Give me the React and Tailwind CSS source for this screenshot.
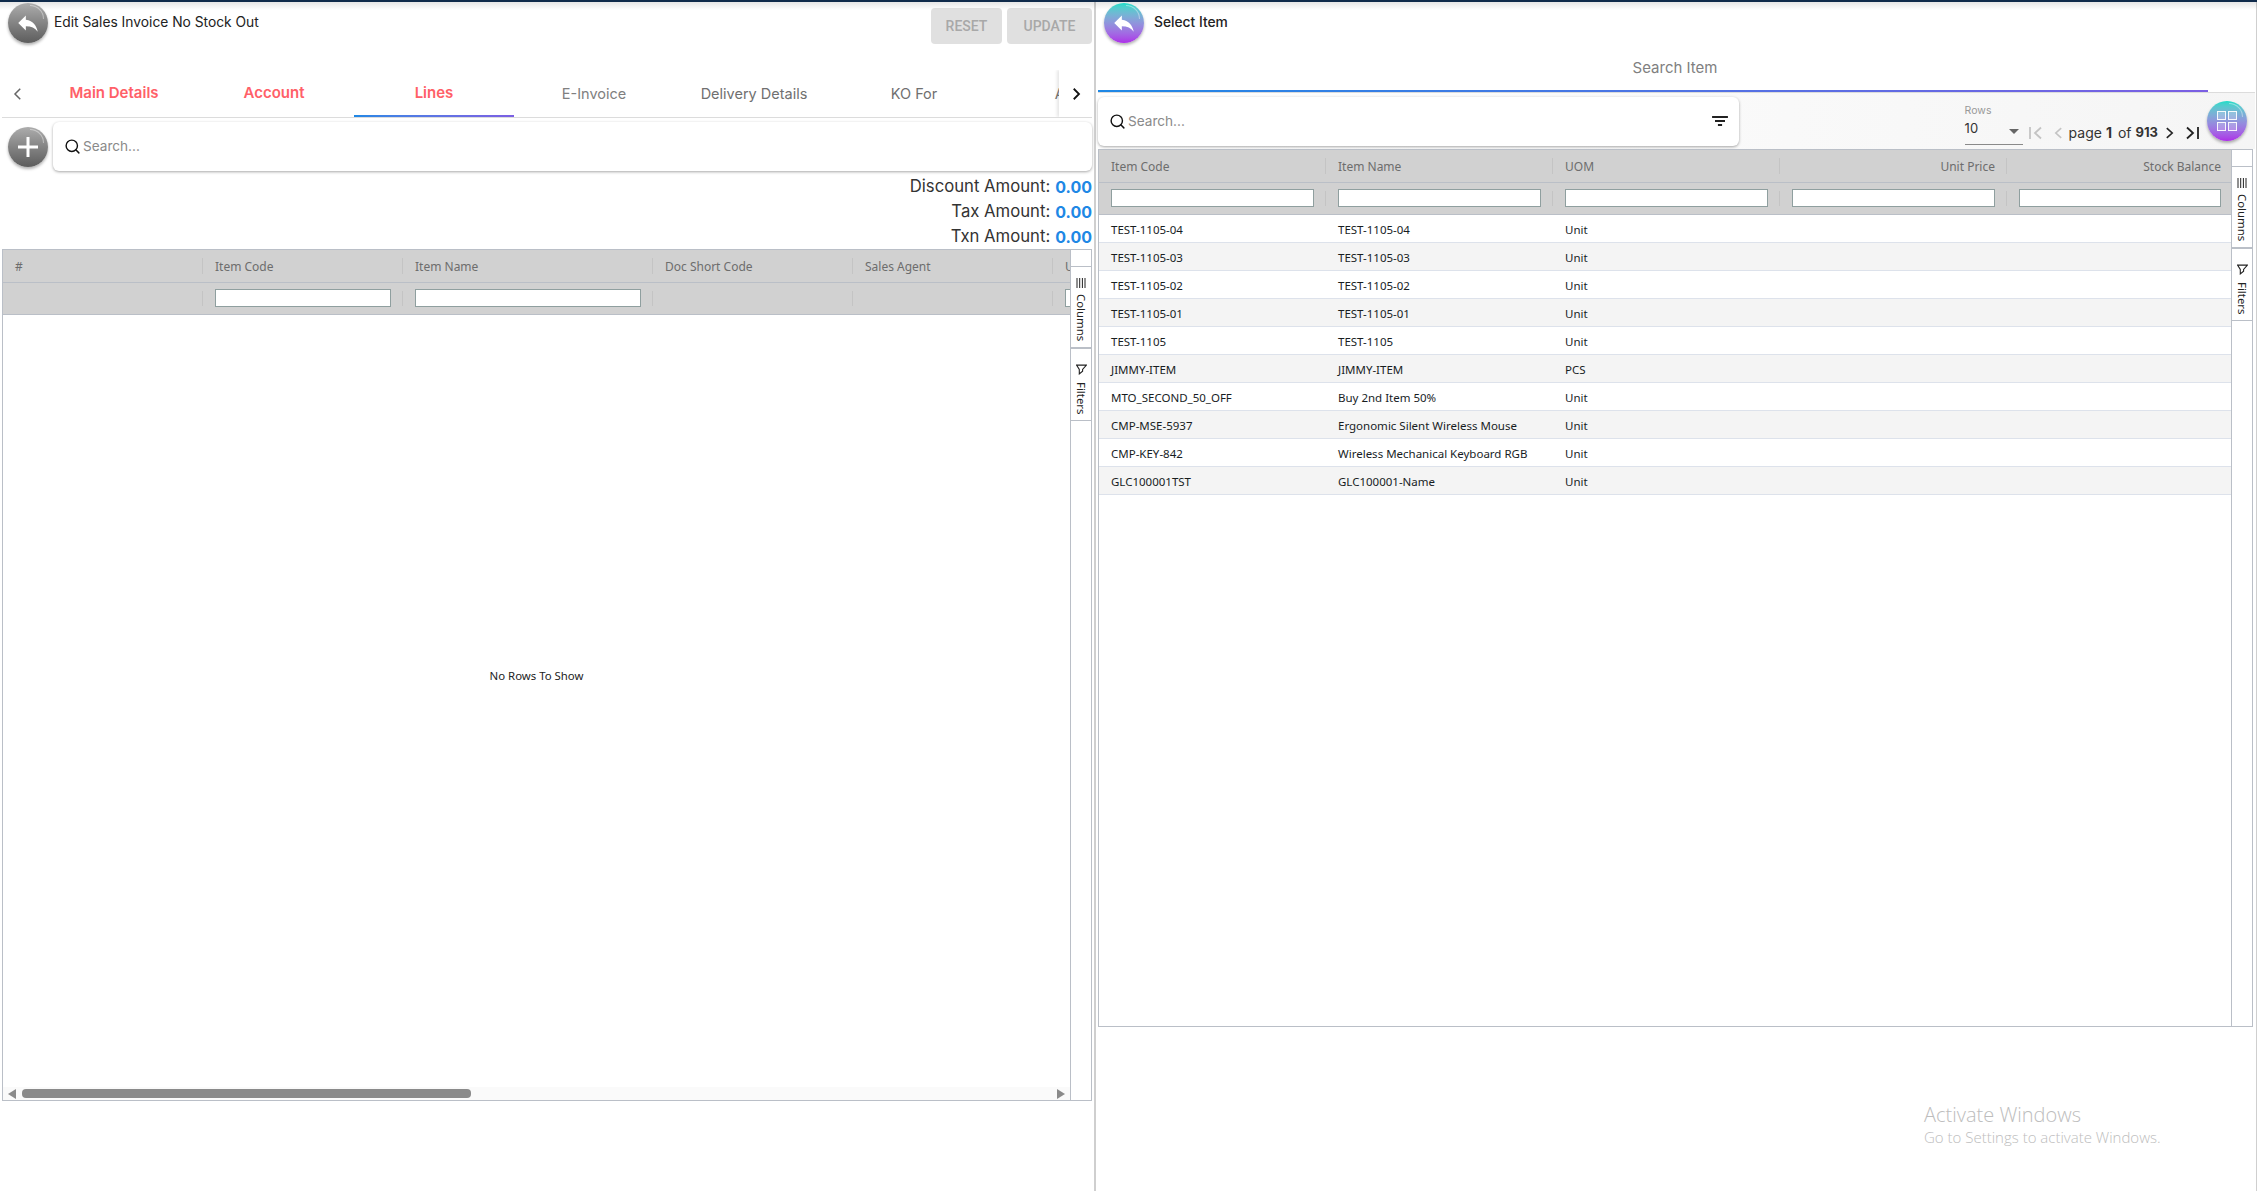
import { Search } from 'lucide-react'

const poppins = "font-['Inter','Noto_Sans',sans-serif]"
const grid = "font-['Noto_Sans','Open_Sans',sans-serif]"

const tabs = [
  { label: 'Main Details', className: 'text-[15px] font-semibold text-[#ff6068]' },
  { label: 'Account', className: 'text-[15px] font-semibold text-[#ff6068]' },
  { label: 'Lines', className: 'text-[15px] font-semibold text-[#ff6068]', active: true },
  { label: 'E-Invoice', className: 'text-[14.5px] text-[#808080]' },
  { label: 'Delivery Details', className: 'text-[14.5px] text-[#707070]' },
  { label: 'KO For', className: 'text-[14.5px] text-[#707070]' },
  { label: 'ARAP', className: 'text-[14.5px] text-[#707070]' },
]

const rows = [
  ['TEST-1105-04', 'TEST-1105-04', 'Unit'],
  ['TEST-1105-03', 'TEST-1105-03', 'Unit'],
  ['TEST-1105-02', 'TEST-1105-02', 'Unit'],
  ['TEST-1105-01', 'TEST-1105-01', 'Unit'],
  ['TEST-1105', 'TEST-1105', 'Unit'],
  ['JIMMY-ITEM', 'JIMMY-ITEM', 'PCS'],
  ['MTO_SECOND_50_OFF', 'Buy 2nd Item 50%', 'Unit'],
  ['CMP-MSE-5937', 'Ergonomic Silent Wireless Mouse', 'Unit'],
  ['CMP-KEY-842', 'Wireless Mechanical Keyboard RGB', 'Unit'],
  ['GLC100001TST', 'GLC100001-Name', 'Unit'],
]

function BackIcon() {
  return (
    <svg viewBox="0 0 24 24" className="w-[26px] h-[26px]" fill="#fff">
      <path d="M10 9V5l-7 7 7 7v-4.1c5 0 8.5 1.6 11 5.1-1-5-4-10-11-11z" />
    </svg>
  )
}

function RoundButton({ color, children }) {
  return (
    <button className={`relative w-10 h-10 rounded-full flex items-center justify-center shrink-0 shadow-[0_2px_3px_rgba(0,0,0,0.3)] ${color}`}>
      <span className="absolute top-[2px] right-[4px] w-[14px] h-[14px] rounded-tr-full border-t border-r border-white/40" />
      {children}
    </button>
  )
}

function SearchBox({ className, children }) {
  return (
    <div className={`h-[49px] bg-white rounded-md flex items-center shadow-[0_1px_3px_rgba(0,0,0,0.35)] ${className}`}>
      <Search size={17} strokeWidth={2} className="ml-[11px] text-[#111] shrink-0" />
      <span className={`ml-[2px] text-[13.6px] text-[#8a8a8a] flex-1 ${poppins}`}>Search...</span>
      {children}
    </div>
  )
}

function HeaderCell({ width, right, children, last }) {
  return (
    <div className={`relative flex items-center h-full shrink-0 px-3 pt-[1px] text-[12px] text-[#6d6d6d] overflow-hidden ${right ? 'justify-end' : ''}`} style={{ width }}>
      <span className="whitespace-nowrap">{children}</span>
      {!last && <span className="absolute right-0 top-[8px] bottom-[8px] w-px bg-[#c4c4c4]" />}
    </div>
  )
}

function FilterCell({ width, input, last }) {
  return (
    <div className="relative flex items-center h-full shrink-0 px-3 pb-[2px] overflow-hidden" style={{ width }}>
      {input && <div className="w-full min-w-[160px] h-[18px] bg-white border border-[#8f9f9f] shrink-0" />}
      {!last && <span className="absolute right-0 top-[8px] bottom-[8px] w-px bg-[#c4c4c4]" />}
    </div>
  )
}

function GridSideBar() {
  return (
    <div className={`w-[21px] shrink-0 border-l border-[#babfc7] bg-white flex flex-col ${grid}`}>
      <div className="h-[17px] border-b border-[#babfc7] shrink-0" />
      <div className="h-[82px] border-b-2 border-[#babfc7] flex flex-col items-center pt-[11px] shrink-0">
        <svg viewBox="0 0 10 10" className="w-[10px] h-[10px] shrink-0" stroke="#222" strokeWidth="1">
          <path d="M1 0v10M3.7 0v10M6.4 0v10M9 0v10" />
        </svg>
        <span className="mt-[6px] text-[11.4px] leading-none text-[#222] [writing-mode:vertical-rl]">Columns</span>
      </div>
      <div className="h-[72px] border-b border-[#babfc7] flex flex-col items-center pt-[15px] shrink-0">
        <svg viewBox="0 0 10 10" className="w-[11px] h-[11px] shrink-0" fill="none" stroke="#222" strokeWidth="1">
          <path d="M0.5 1h9L6 5v1.5L3 9V5z" />
        </svg>
        <span className="mt-[7px] text-[11.4px] leading-none text-[#222] [writing-mode:vertical-rl]">Filters</span>
      </div>
    </div>
  )
}

function Tabs() {
  return (
    <div className="h-[48px] mt-[27px] ml-[2px] w-[1090px] border-b border-[#dcdcdc] flex items-stretch relative overflow-hidden">
      <div className="w-[32px] shrink-0 flex items-center justify-center">
        <svg viewBox="0 0 24 24" className="w-[18px] h-[18px]" fill="none" stroke="#666" strokeWidth="2">
          <path d="M15 5l-7 7 7 7" />
        </svg>
      </div>
      <div className="flex-1 flex overflow-hidden">
        {tabs.map((tab) => (
          <div key={tab.label} className={`relative w-[160px] shrink-0 flex items-center justify-center ${poppins} ${tab.className}`}>
            {tab.label}
            {tab.active && <span className="absolute left-0 right-0 bottom-0 h-[2px] bg-gradient-to-r from-[#1e88e5] to-[#7b5fe3]" />}
          </div>
        ))}
      </div>
      <div className="w-[33px] shrink-0 bg-white flex items-center justify-center shadow-[-2px_0_3px_rgba(0,0,0,0.1)]">
        <svg viewBox="0 0 24 24" className="w-[18px] h-[18px]" fill="none" stroke="#111" strokeWidth="2.4">
          <path d="M9 5l7 7-7 7" />
        </svg>
      </div>
    </div>
  )
}

function AmountLine({ label, value }) {
  return (
    <div className="h-[25px] flex items-center justify-end gap-[5px] text-[#333]">
      <span className="text-[16.7px]">{label}</span>
      <span className="text-[16px] font-bold text-[#1e88e5]">{value}</span>
    </div>
  )
}

function LeftPane() {
  const cols = [
    { w: 200, label: '#' },
    { w: 200, label: 'Item Code', input: true },
    { w: 250, label: 'Item Name', input: true },
    { w: 200, label: 'Doc Short Code' },
    { w: 200, label: 'Sales Agent' },
    { w: 200, label: 'UOM', input: true },
  ]
  return (
    <div className="w-[1094px] h-full shrink-0 flex flex-col">
      <div className="flex items-start pt-[3px] pl-[8px] pr-[2px] h-[43px]">
        <RoundButton color="bg-gradient-to-b from-[#adadad] to-[#5d5d5d]">
          <BackIcon />
        </RoundButton>
        <span className={`ml-[6px] mt-[9px] text-[13.8px] text-[#222] ${poppins}`}>Edit Sales Invoice No Stock Out</span>
        <div className={`ml-auto mt-[5px] flex gap-[5px] text-[14px] font-medium text-[#a8a8a8] font-['Roboto',sans-serif]`}>
          <button className="w-[71px] h-[36px] bg-[#e0e0e0] rounded">RESET</button>
          <button className="w-[85px] h-[36px] bg-[#e0e0e0] rounded">UPDATE</button>
        </div>
      </div>

      <Tabs />

      <div className="flex items-center pl-[8px] pr-[2px] mt-[4px]">
        <RoundButton color="bg-gradient-to-b from-[#adadad] to-[#5d5d5d]">
          <svg viewBox="0 0 24 24" className="w-[24px] h-[24px]" stroke="#fff" strokeWidth="3">
            <path d="M12 2v20M2 12h20" />
          </svg>
        </RoundButton>
        <SearchBox className="ml-[5px] flex-1" />
      </div>

      <div className={`mr-[2px] mt-[3px] ${poppins}`}>
        <AmountLine label="Discount Amount:" value="0.00" />
        <AmountLine label="Tax Amount:" value="0.00" />
        <AmountLine label="Txn Amount:" value="0.00" />
      </div>

      {/* Lines grid */}
      <div className={`ml-[2px] w-[1090px] h-[852px] border border-[#babfc7] flex ${grid}`}>
        <div className="flex-1 min-w-0 flex flex-col">
          <div className="h-[33px] bg-[#d1d1d1] border-b border-[#babfc7] flex shrink-0 overflow-hidden">
            {cols.map((c) => (
              <HeaderCell key={c.label} width={c.w}>{c.label}</HeaderCell>
            ))}
          </div>
          <div className="h-[32px] bg-[#d1d1d1] border-b border-[#babfc7] flex shrink-0 overflow-hidden">
            {cols.map((c) => (
              <FilterCell key={c.label} width={c.w} input={c.input} />
            ))}
          </div>
          <div className="flex-1 flex items-center justify-center text-[11.4px] text-[#222] pb-[50px]">No Rows To Show</div>
          <div className="h-[13px] bg-[#fafafa] flex items-center shrink-0 pl-[5px] pr-[5px]">
            <svg viewBox="0 0 8 10" className="w-[8px] h-[10px]" fill="#8a8a8a"><path d="M8 0v10L0 5z" /></svg>
            <div className="ml-[6px] w-[449px] h-[9px] bg-[#8a8a8a] rounded-[4px]" />
            <svg viewBox="0 0 8 10" className="ml-auto w-[8px] h-[10px]" fill="#8a8a8a"><path d="M0 0v10l8-5z" /></svg>
          </div>
        </div>
        <GridSideBar />
      </div>
    </div>
  )
}

function Pager() {
  return (
    <div className={`flex flex-col items-start ${poppins}`}>
      <div className="flex items-end">
        <div className="w-[58px] h-[39px] border-b border-[#8a8a8a] relative">
          <div className="text-[10.5px] leading-none text-[#999]">Rows</div>
          <div className="mt-[6px] text-[13px] leading-none text-[#333]">10</div>
          <span className="absolute right-[4px] top-[23px] w-0 h-0 border-x-[5px] border-x-transparent border-t-[5px] border-t-[#666]" />
        </div>
        <div className="flex items-center h-[20px] ml-[6px] mb-[2px] text-[14px] text-[#333]">
          <svg viewBox="0 0 14 14" className="w-[14px] h-[14px]" fill="none" stroke="#c4c4c4" strokeWidth="1.8"><path d="M1 1v12M12 1.5L6 7l6 5.5" /></svg>
          <svg viewBox="0 0 10 14" className="ml-[11px] w-[9px] h-[14px]" fill="none" stroke="#c4c4c4" strokeWidth="1.8"><path d="M8 1.5L2 7l6 5.5" /></svg>
          <span className="ml-[6px]">page</span>
          <span className="ml-[4px] font-bold">1</span>
          <span className="ml-[6px]">of</span>
          <span className="ml-[4px] text-[13px] font-bold">913</span>
          <svg viewBox="0 0 10 14" className="ml-[7px] w-[9px] h-[14px]" fill="none" stroke="#222" strokeWidth="1.8"><path d="M2 1.5L8 7l-6 5.5" /></svg>
          <svg viewBox="0 0 14 14" className="ml-[11px] w-[14px] h-[14px]" fill="none" stroke="#222" strokeWidth="1.8"><path d="M2 1.5L8 7l-6 5.5M13 1v12" /></svg>
        </div>
      </div>
    </div>
  )
}

function RightPane() {
  const cols = [
    { w: 227, label: 'Item Code' },
    { w: 227, label: 'Item Name' },
    { w: 227, label: 'UOM' },
    { w: 227, label: 'Unit Price', right: true },
    { w: 226, label: 'Stock Balance', right: true },
  ]
  return (
    <div className="flex-1 h-full min-w-0 flex flex-col pl-[2px] border-r border-[#cfcfcf]">
      <div className="flex items-start pt-[3px] pl-[6px] h-[43px]">
        <RoundButton color="bg-gradient-to-b from-[#12dcc8] to-[#ac2ce8]">
          <BackIcon />
        </RoundButton>
        <span className={`ml-[10px] mt-[9px] text-[13.8px] font-medium text-[#222] ${poppins}`}>Select Item</span>
      </div>

      <div className="h-[50px] mr-[1px] border-b border-[#dcdcdc]">
        <div className={`w-[1110px] h-[49px] pt-[14px] pl-[44px] text-center text-[15px] text-[#808080] border-b-2 border-transparent [border-image:linear-gradient(to_right,#1e88e5,#7b5fe3)_1] ${poppins}`}>
          Search Item
        </div>
      </div>

      <div className="h-[56px] mr-[1px] flex items-center bg-gradient-to-r from-white to-[#f5f5f5] pr-[8px]">
        <SearchBox className="w-[641px]">
          <svg viewBox="0 0 24 24" className="w-[20px] h-[20px] mr-[9px]" stroke="#222" strokeWidth="2.4">
            <path d="M2.5 7.2h19M6 12h12M9.5 16.8h5" />
          </svg>
        </SearchBox>
        <div className="ml-auto flex items-end mr-[8px] mt-[8px]">
          <Pager />
        </div>
        <RoundButton color="bg-gradient-to-b from-[#12dcc8] to-[#ac2ce8]">
          <div className="grid grid-cols-2 gap-[2px]">
            <span className="w-[9px] h-[9px] border border-white/90 bg-white/20" />
            <span className="w-[9px] h-[9px] border border-white/90 bg-white/20" />
            <span className="w-[9px] h-[9px] border border-white/90 bg-white/20" />
            <span className="w-[9px] h-[9px] border border-white/90 bg-white/20" />
          </div>
        </RoundButton>
      </div>

      {/* Item picker grid */}
      <div className={`w-[1155px] h-[878px] border border-[#babfc7] flex ${grid}`}>
        <div className="flex-1 min-w-0 flex flex-col">
          <div className="h-[33px] bg-[#d1d1d1] border-b border-[#babfc7] flex shrink-0">
            {cols.map((c, i) => (
              <HeaderCell key={c.label} width={c.w} right={c.right} last={i === cols.length - 1}>{c.label}</HeaderCell>
            ))}
          </div>
          <div className="h-[32px] bg-[#d1d1d1] border-b border-[#babfc7] flex shrink-0">
            {cols.map((c, i) => (
              <FilterCell key={c.label} width={c.w} input last={i === cols.length - 1} />
            ))}
          </div>
          {rows.map((row, i) => (
            <div key={row[0]} className={`h-[28px] pt-[2px] flex items-center shrink-0 border-b border-[#dde2eb] text-[11.5px] text-[#181d1f] ${i % 2 ? 'bg-[#f4f4f4]' : 'bg-white'}`}>
              <div className="w-[227px] px-3 shrink-0">{row[0]}</div>
              <div className="w-[227px] px-3 shrink-0">{row[1]}</div>
              <div className="px-3">{row[2]}</div>
            </div>
          ))}
        </div>
        <GridSideBar />
      </div>
    </div>
  )
}

export default function App() {
  return (
    <div className="relative w-[2257px] h-[1191px] bg-white overflow-hidden flex">
      <div className="absolute top-0 left-0 right-0 h-[8px] bg-gradient-to-b from-[#0f2a4a] from-20% to-white/0 to-25%" />
      <div className="absolute top-[2px] left-0 right-0 h-[8px] bg-gradient-to-b from-black/10 to-transparent" />
      <LeftPane />
      <div className="w-[2px] h-full bg-[#cfcfcf] shrink-0" />
      <RightPane />
      {/* Windows watermark */}
      <div className="absolute left-[1924px] top-[1103px] text-[#bdbdbd] font-['Open_Sans',sans-serif] font-light">
        <div className="text-[20px] leading-[24px]">Activate Windows</div>
        <div className="text-[15px] leading-[20px]">Go to Settings to activate Windows.</div>
      </div>
    </div>
  )
}
